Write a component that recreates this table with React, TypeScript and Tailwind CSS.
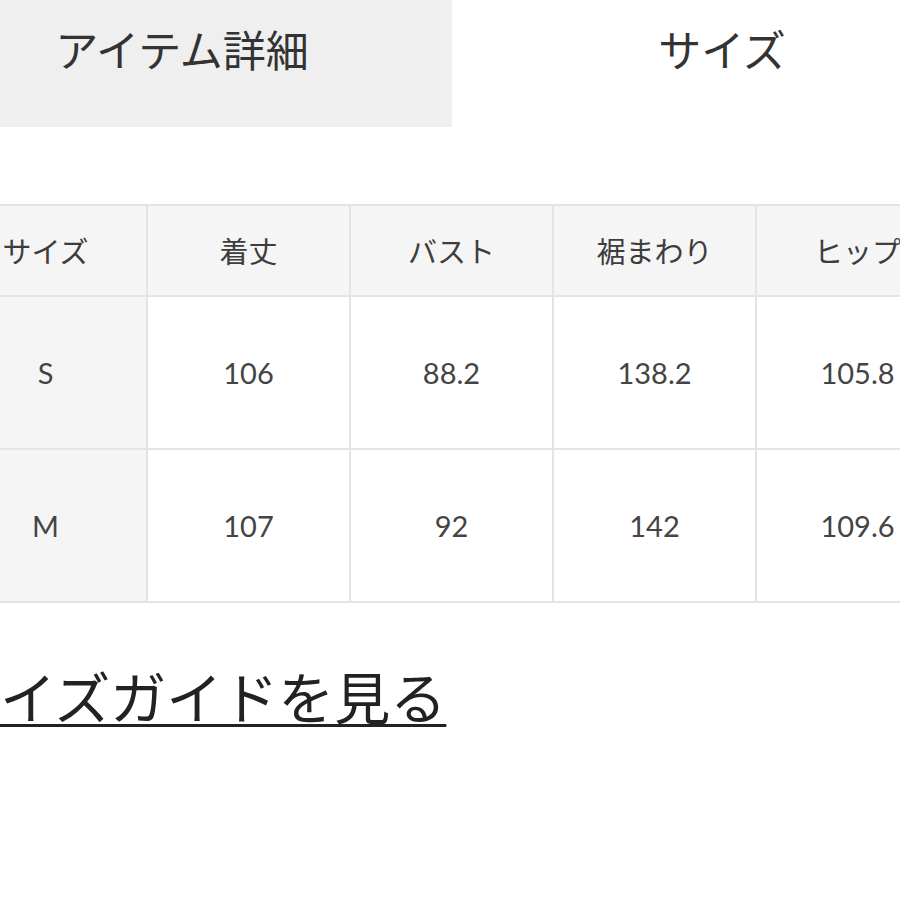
const JP = "font-['Noto_Sans_CJK_JP','Noto_Sans',sans-serif]";
const NUM = "font-['Lato','Noto_Sans_CJK_JP',sans-serif]";

const HEADERS = ["サイズ", "着丈", "バスト", "裾まわり", "ヒップ"];
const ROWS = [
  ["S", "106", "88.2", "138.2", "105.8"],
  ["M", "107", "92", "142", "109.6"],
];

export default function App() {
  return (
    <div className={`w-[900px] h-[900px] overflow-hidden bg-white text-[#3a3a3a] ${JP}`}>
      {/* tabs */}
      <div className="flex -ml-[88px] w-max">
        <div className="w-[540px] h-[127px] bg-[#efefef] flex items-center justify-center pb-[30px] text-[43px] text-[#333]">
          アイテム詳細
        </div>
        <div className="w-[540px] h-[127px] bg-white flex items-center justify-center pb-[30px] text-[43px] text-[#333]">
          サイズ
        </div>
      </div>

      {/* size table */}
      <table className="-ml-[57px] mt-[77px] border-collapse w-max">
        <thead>
          <tr>
            {HEADERS.map((h) => (
              <th
                key={h}
                className="w-[203px] h-[91px] border-2 border-[#e4e4e4] bg-[#f5f5f5] font-normal text-[29px] text-[#3d3d3d] text-center align-middle whitespace-nowrap"
              >
                {h}
              </th>
            ))}
          </tr>
        </thead>
        <tbody>
          {ROWS.map((r) => (
            <tr key={r[0]}>
              {r.map((v, i) => (
                <td
                  key={i}
                  className={`w-[203px] h-[153px] border-2 border-[#e4e4e4] text-center align-middle text-[29px] text-[#444] ${NUM} ${
                    i === 0 ? "bg-[#f5f5f5]" : "bg-white"
                  }`}
                >
                  {v}
                </td>
              ))}
            </tr>
          ))}
        </tbody>
      </table>

      {/* size guide link */}
      <div className="-ml-[56px] mt-[58px]">
        <a className="text-[56px] leading-[68px] text-[#222] underline decoration-[3px] underline-offset-[5px] whitespace-nowrap">
          サイズガイドを見る
        </a>
      </div>
    </div>
  );
}
